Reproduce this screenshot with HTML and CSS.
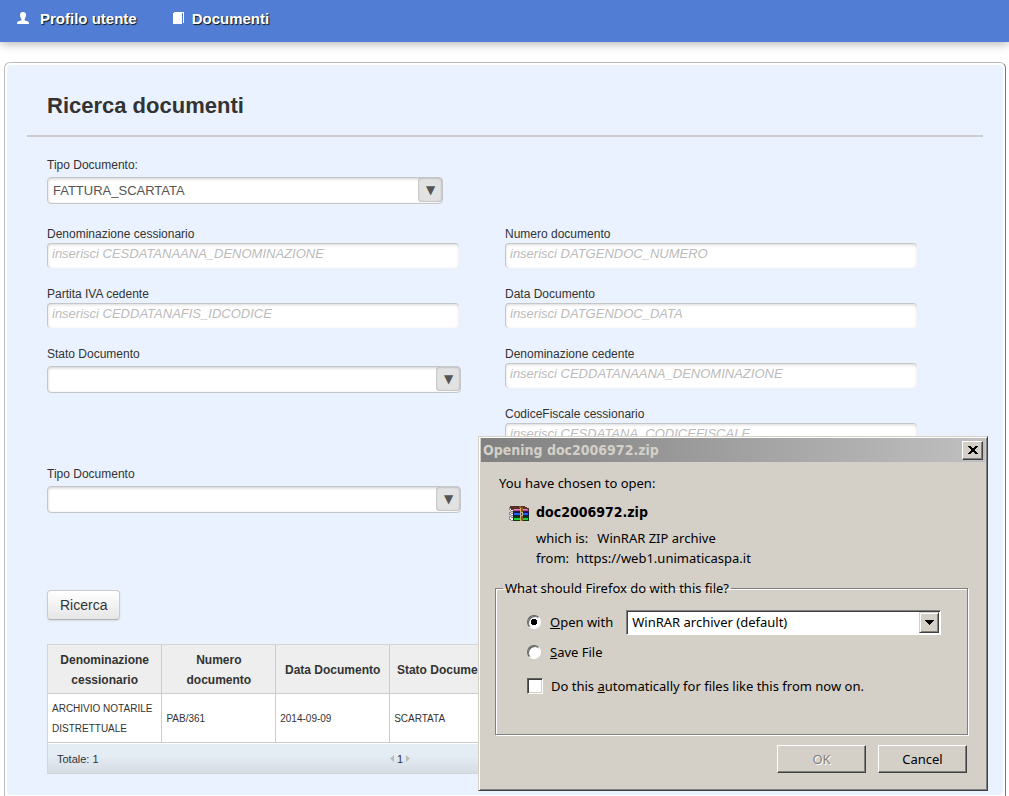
FILE: index.html
```html
<!DOCTYPE html>
<html lang="it">
<head>
<meta charset="utf-8">
<title>Ricerca documenti</title>
<link rel="stylesheet" href="styles.css">
</head>
<body>
<nav class="topbar">
  <a class="nav-link" href="#">
    <svg class="nav-icon" width="12" height="12" viewBox="0 0 12 12"><path fill="#fff" d="M6 0C4 0 3 1 3 2.800c0 1.200.3 2.200.7 3 .3.600.7 1 .7 1.400v1C3 9 .9 9 .3 10L0 12h12l-.3-2C11 9 9 9 7.600 8.200v-1c0-.4.4-.8.700-1.400.4-.8.700-1.800.7-3C9 1 8 0 6 0z"/></svg>
    <span>Profilo utente</span>
  </a>
  <a class="nav-link" href="#">
    <svg class="nav-icon" width="12" height="12" viewBox="0 0 12 12" shape-rendering="crispEdges"><path fill="#fff" d="M0 1h1V0h10v11h-1V1H9v11H0z"/></svg>
    <span>Documenti</span>
  </a>
</nav>

<main class="card">
  <div class="card-body">
    <h1 class="title">Ricerca documenti</h1>
    <form class="search">
      <div class="type-field">
        <label for="tipo">Tipo Documento:</label>
        <div class="select-wrap">
          <select id="tipo"><option>FATTURA_SCARTATA</option></select>
        </div>
      </div>
      <div class="grid">
        <div class="field">
          <label for="cess">Denominazione cessionario</label>
          <input id="cess" type="text" placeholder="inserisci CESDATANAANA_DENOMINAZIONE">
        </div>
        <div class="field">
          <label for="num">Numero documento</label>
          <input id="num" type="text" placeholder="inserisci DATGENDOC_NUMERO">
        </div>
        <div class="field">
          <label for="iva">Partita IVA cedente</label>
          <input id="iva" type="text" placeholder="inserisci CEDDATANAFIS_IDCODICE">
        </div>
        <div class="field">
          <label for="data">Data Documento</label>
          <input id="data" type="text" placeholder="inserisci DATGENDOC_DATA">
        </div>
        <div class="field">
          <label for="stato">Stato Documento</label>
          <div class="select-wrap">
            <select id="stato"><option></option></select>
          </div>
        </div>
        <div class="field">
          <label for="ced">Denominazione cedente</label>
          <input id="ced" type="text" placeholder="inserisci CEDDATANAANA_DENOMINAZIONE">
        </div>
        <div class="field field-right">
          <label for="cf">CodiceFiscale cessionario</label>
          <input id="cf" type="text" placeholder="inserisci CESDATANA_CODICEFISCALE">
        </div>
        <div class="field">
          <label for="tipodoc">Tipo Documento</label>
          <div class="select-wrap">
            <select id="tipodoc"><option></option></select>
          </div>
        </div>
      </div>
      <button class="btn" type="button">Ricerca</button>
    </form>

    <div class="results">
      <table class="table">
        <thead>
          <tr><th>Denominazione cessionario</th><th>Numero documento</th><th>Data Documento</th><th>Stato Documento</th></tr>
        </thead>
        <tbody>
          <tr><td>ARCHIVIO NOTARILE DISTRETTUALE</td><td>PAB/361</td><td>2014-09-09</td><td>SCARTATA</td></tr>
        </tbody>
      </table>
      <div class="table-foot">
        <span class="total">Totale: 1</span>
        <span class="pager">
          <svg width="4" height="7" viewBox="0 0 4 7"><path fill="#bbb" d="M4 0v7L0 3.500z"/></svg>
          <span>1</span>
          <svg width="4" height="7" viewBox="0 0 4 7"><path fill="#bbb" d="M0 0v7l4-3.500z"/></svg>
        </span>
      </div>
    </div>
  </div>
</main>

<section class="dialog" role="dialog" aria-labelledby="dialog-title">
  <header class="dialog-bar">
    <span id="dialog-title">Opening doc2006972.zip</span>
    <button class="close" type="button" aria-label="Close">
      <svg width="10" height="8" viewBox="0 0 10 8" shape-rendering="crispEdges"><path fill="#000" d="M0 0h3v1h1v1h2V1h1V0h3v1H9v1H8v1H7v2h1v1h1v1h1v1H7V7H6V6H4v1H3v1H0V7h1V6h1V5h1V3H2V2H1V1H0z"/></svg>
    </button>
  </header>
  <div class="dialog-body">
    <p class="intro">You have chosen to open:</p>
    <div class="file">
      <svg class="file-icon" width="20" height="15" viewBox="0 0 20 15" shape-rendering="crispEdges">
        <path fill="#5a2f28" d="M1 0h15v1h2v1h2v3H4V4H2V2H1z"/>
        <path fill="#b04a90" d="M4 3h15v2H4z"/>
        <path fill="#e884cc" d="M5 3h13v1H5z"/>
        <path fill="#3a1a30" d="M4 5h16v1H4z"/>
        <path fill="#8a8a8a" d="M0 1h1v1h1v2h2v2H2V5H1V4H0zM0 6h2v1h2v3H2V9H0zM0 10h2v1h2v4H2v-1H0z"/>
        <path fill="#f4f4f4" d="M1 3h1v1h2v1H2V4H1zM1 7h1v1h2v1H2V8H1zM1 11h1v1h2v2H2v-1H1z"/>
        <path fill="#101858" d="M4 6h16v4H4z"/>
        <path fill="#2860f0" d="M5 7h14v2H5z"/>
        <path fill="#0a3a10" d="M4 10h16v5H4z"/>
        <path fill="#20d040" d="M5 12h14v2H5z"/>
        <path fill="#8a5a28" d="M10 0h2v1h2v14h-3V2h-1z"/>
        <path fill="#d8b060" d="M11 2h1v4h-1zM11 10h1v5h-1z"/>
        <path fill="#b8b090" d="M11 6h3v4h-3z"/>
        <path fill="#444" d="M12 7h1v2h-1z"/>
      </svg>
      <div class="file-info">
        <strong class="file-name">doc2006972.zip</strong>
        <div class="file-line which"><span>which is:</span><span>WinRAR ZIP archive</span></div>
        <div class="file-line"><span>from:</span><span>https://web1.unimaticaspa.it</span></div>
      </div>
    </div>
    <fieldset class="choices">
      <legend>What should Firefox do with this file?</legend>
      <div class="choice">
        <input class="radio" type="radio" name="action" id="open" checked>
        <label for="open"><u>O</u>pen with</label>
        <div class="combo">
          <select aria-label="Open with"><option>WinRAR archiver (default)</option></select>
          <span class="combo-arrow"><svg width="9" height="5" viewBox="0 0 9 5" shape-rendering="crispEdges"><path d="M0 0h9v1H8v1H7v1H6v1H5v1H4V4H3V3H2V2H1V1H0z"/></svg></span>
        </div>
      </div>
      <div class="choice">
        <input class="radio" type="radio" name="action" id="save">
        <label for="save"><u>S</u>ave File</label>
      </div>
      <div class="choice choice-auto">
        <input class="check" type="checkbox" id="auto">
        <label for="auto">Do this <u>a</u>utomatically for files like this from now on.</label>
      </div>
    </fieldset>
    <div class="actions">
      <button class="win-btn" type="button" disabled>OK</button>
      <button class="win-btn" type="button">Cancel</button>
    </div>
  </div>
</section>
</body>
</html>
```
FILE: styles.css
```css
* {
  box-sizing: border-box;
}

body {
  margin: 0;
  min-height: 100vh;
  display: flex;
  flex-direction: column;
  position: relative;
  background: #fff;
  color: #333;
  font: 12px/20px "Liberation Sans", Arial, sans-serif;
}

.topbar {
  display: flex;
  gap: 36px;
  align-items: center;
  height: 42px;
  padding: 0 17px 4px;
  background: #517ed4;
  box-shadow: 0 1px 10px rgba(0, 0, 0, 0.35);
}

.nav-link {
  display: flex;
  align-items: center;
  gap: 11px;
  color: #fff;
  font-size: 15px;
  font-weight: bold;
  text-decoration: none;
  text-shadow: 1px 1px 1px #111;
}

.nav-link + .nav-link {
  gap: 7px;
}

.nav-icon {
  margin-bottom: 2px;
}

.card {
  flex: 1;
  display: flex;
  margin: 20px 3px 0 4px;
  padding: 2px 2px 1px;
  border: 1px solid #bbb;
  border-right-color: #777;
  border-bottom: 0;
  border-radius: 6px 6px 0 0;
  background: #fff;
}

.card-body {
  flex: 1;
  min-width: 0;
  padding: 20px;
  border-radius: 4px;
  background: #eaf2ff;
}

.title {
  margin: 0;
  padding: 1px 20px 9px;
  border-bottom: 2px solid #ccc;
  font-size: 22px;
  line-height: 40px;
}

.search {
  padding: 19px 20px 0;
}

.type-field {
  max-width: 396px;
  margin-bottom: 20px;
}

.search label {
  display: block;
  line-height: 18px;
}

.select-wrap {
  position: relative;
  margin-top: 3px;
}

.select-wrap select {
  appearance: none;
  display: block;
  width: 100%;
  height: 27px;
  padding: 0 28px 0 5px;
  border: 1px solid #c4c6ca;
  border-radius: 4px;
  background: #fff;
  box-shadow: inset 0 1px 3px rgba(0, 0, 0, 0.2);
  color: #555;
  font: 13px "Liberation Sans", Arial, sans-serif;
}

.select-wrap::after {
  content: "▼";
  position: absolute;
  top: 1px;
  right: 1px;
  bottom: 2px;
  width: 23px;
  padding-left: 1px;
  border-radius: 4px;
  background: #e2e2e2;
  box-shadow: inset 0 0 2px rgba(0, 0, 0, 0.4);
  color: #555;
  font: 12px/24px "DejaVu Sans", sans-serif;
  text-align: center;
  pointer-events: none;
}

.grid {
  display: grid;
  grid-template-columns: 1fr 1fr;
  grid-auto-rows: 60px;
}

.field {
  padding-top: 1px;
}

.field-right {
  grid-column: 2;
}

.field input {
  display: block;
  width: 90%;
  height: 25px;
  padding: 0 4px 6px;
  border: 0;
  border-top: 1px solid #c4c6ca;
  border-left: 1px solid #c4c6ca;
  border-radius: 4px;
  background: #fff;
  box-shadow: inset 0 1px 3px rgba(0, 0, 0, 0.15);
  font: italic 13px "Liberation Sans", Arial, sans-serif;
}

.field input::placeholder {
  color: #bbb;
}

.field .select-wrap {
  width: 414px;
  max-width: 100%;
}

.btn {
  display: block;
  height: 30px;
  margin-top: 66px;
  padding: 0 12px;
  border: 1px solid #ccc;
  border-bottom-color: #b3b3b3;
  border-radius: 4px;
  background: linear-gradient(#fff, #e6e6e6);
  box-shadow: 0 1px 2px rgba(0, 0, 0, 0.1);
  color: #333;
  font: 14px "Liberation Sans", Arial, sans-serif;
}

.results {
  width: 458px;
  margin: 24px 20px 0;
  border: 1px solid #d3d6da;
}

.table {
  width: 100%;
  border-collapse: collapse;
  table-layout: fixed;
}

.table th,
.table td {
  height: 48px;
  padding: 5px 4px 3px;
  border-right: 1px solid #ccc;
  border-bottom: 1px solid #ccc;
}

.table th {
  background: #eee;
}

.table th:last-child {
  white-space: nowrap;
}

.table td {
  background: #fff;
  font-size: 10px;
}

.table-foot {
  display: grid;
  grid-template-columns: 3fr 1fr;
  align-items: center;
  height: 30px;
  border-top: 1px solid #fff;
  background: linear-gradient(#e4ecf4 40%, #d6dce2);
  font-size: 11px;
}

.total {
  padding-left: 9px;
}

.pager {
  display: flex;
  align-items: center;
  gap: 3px;
}

.dialog {
  position: absolute;
  top: 436px;
  left: 478px;
  width: 510px;
  padding: 1px;
  border: 1px solid;
  border-color: #d4d0c8 #404040 #404040 #d4d0c8;
  background: #d4d0c8;
  box-shadow: inset 1px 1px #fff, inset -1px -1px #808080;
  color: #000;
  font: 13px/20px "Noto Sans", Tahoma, sans-serif;
}

.dialog-bar {
  display: flex;
  align-items: center;
  justify-content: space-between;
  height: 24px;
  margin: 0 1px;
  padding: 0 2px;
  background: linear-gradient(90deg, #808080, #c0c0c0);
  color: #d4d0c8;
  font-family: "DejaVu Sans Condensed", Tahoma, sans-serif;
  font-size: 14px;
  font-weight: bold;
}

.close,
.win-btn {
  border: 1px solid;
  border-color: #fff #404040 #404040 #fff;
  border-radius: 0;
  background: #d4d0c8;
  box-shadow: inset -1px -1px #808080;
}

.close {
  display: flex;
  align-items: center;
  justify-content: center;
  width: 21px;
  height: 19px;
  padding: 0;
}

.dialog-body {
  padding: 11px 18px 16px 15px;
}

.intro {
  margin: 0 4px 9px;
}

.file {
  display: flex;
  gap: 7px;
  padding-left: 14px;
}

.file-icon {
  margin-top: 4px;
}

.file-name {
  display: block;
  font-family: "DejaVu Sans Condensed", Tahoma, sans-serif;
  font-size: 14px;
}

.file-line {
  display: flex;
  gap: 7px;
}

.which {
  gap: 9px;
  margin-top: 6px;
}

.choices {
  height: 157px;
  margin: 10px 0 0;
  padding: 11px 26px 0 31px;
  border: 1px solid #808080;
  box-shadow: 1px 1px #fff, inset 1px 1px #fff;
}

.choices legend {
  margin-left: -24px;
  padding: 0 2px;
}

.choice {
  display: flex;
  align-items: center;
  gap: 9px;
  height: 26px;
  margin-bottom: 4px;
}

.choice-auto {
  gap: 8px;
  margin-top: 8px;
}

.radio,
.check {
  appearance: none;
  flex: none;
  margin: 0;
  border: 1px solid;
  border-color: #606060 #fff #fff #606060;
  background: #fff;
}

.radio {
  width: 14px;
  height: 14px;
  border-radius: 50%;
  box-shadow: inset 1px 1px #606060;
}

.radio:checked {
  background: radial-gradient(circle, #000 0 3px, #fff 3px);
}

.check {
  width: 16px;
  height: 16px;
  box-shadow: inset 1px 1px #404040, inset -1px -1px #d4d0c8;
}

.combo {
  display: flex;
  flex: 1;
  height: 25px;
  margin-left: 4px;
  padding: 1px;
  border: 1px solid;
  border-color: #808080 #fff #fff #808080;
  background: #fff;
  box-shadow: inset 1px 1px #404040;
}

.combo select {
  appearance: none;
  flex: 1;
  min-width: 0;
  padding: 0 4px;
  border: 0;
  background: none;
  color: #000;
  font: inherit;
}

.combo-arrow {
  display: flex;
  align-items: center;
  justify-content: center;
  width: 20px;
  border: 1px solid;
  border-color: #d4d0c8 #404040 #404040 #d4d0c8;
  background: #d4d0c8;
  box-shadow: inset 1px 1px #fff, inset -1px -1px #808080;
}

.actions {
  display: flex;
  justify-content: flex-end;
  gap: 12px;
  margin-top: 10px;
  padding-right: 1px;
}

.win-btn {
  width: 89px;
  height: 28px;
  color: #000;
  font: inherit;
}

.win-btn:disabled {
  color: #808080;
  text-shadow: 1px 1px #fff;
}
```
